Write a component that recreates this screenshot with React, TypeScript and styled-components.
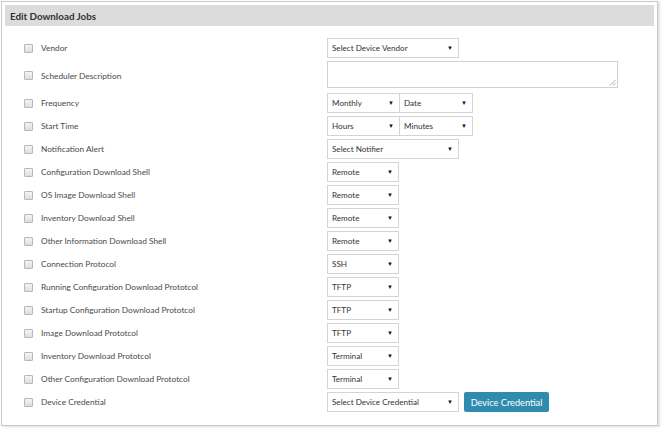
import React from "react";
import styled, { createGlobalStyle } from "styled-components";

const Global = createGlobalStyle`
  html, body { margin: 0; padding: 0; background: #ffffff; }
  body { font-family: "Lato", "Open Sans", sans-serif; color: #444; }
`;

const Page = styled.div`
  padding: 1px 0 0 1px;
  width: 661px;
  height: 430px;
  box-sizing: border-box;
`;

const Panel = styled.div`
  width: 657px;
  height: 425px;
  box-sizing: border-box;
  border: 1px solid #c8c8c8;
  padding: 3px;
  background: #fff;
  box-shadow: 2px 1px 2px rgba(0, 0, 0, 0.12);
`;

const Header = styled.div`
  height: 21px;
  background: #dcdcdc;
  display: flex;
  align-items: center;
  padding-left: 5px;
  font-size: 9.8px;
  font-weight: 700;
  color: #333;
`;

const Body = styled.div`
  padding: 12px 0 0 19px;
  display: flex;
  flex-direction: column;
  gap: 3px;
`;

const Row = styled.div<{ $tall?: boolean }>`
  display: grid;
  grid-template-columns: 17px 286px auto;
  align-items: center;
  height: ${(p) => (p.$tall ? "29px" : "20px")};
`;

const Check = styled.span`
  width: 7px;
  height: 7px;
  border: 1px solid #b8b8b8;
  border-radius: 1px;
  background: linear-gradient(#f4f4f4, #dedede);
  display: block;
`;

const Label = styled.span`
  font-size: 8.3px;
  color: #4a4a4a;
  white-space: nowrap;
`;

const Controls = styled.div`
  display: flex;
  align-items: center;
  height: 100%;
`;

const SelectBox = styled.div<{ $w: number }>`
  width: ${(p) => p.$w}px;
  height: 20px;
  box-sizing: border-box;
  border: 1px solid #d4d4d4;
  display: flex;
  align-items: center;
  justify-content: space-between;
  padding: 0 5px 0 4px;
  font-size: 8.1px;
  color: #333;
  background: #fff;
  & + & { margin-left: -1px; }
`;

const Arrow = styled.span`
  font-size: 6px;
  color: #111;
  line-height: 1;
`;

const TextArea = styled.div`
  width: 291px;
  height: 27px;
  box-sizing: border-box;
  border: 1px solid #d0d0d0;
  align-self: flex-start;
  position: relative;
`;

const Grip = styled.svg`
  position: absolute;
  right: 1px;
  bottom: 1px;
`;

const Button = styled.div`
  margin-left: 5px;
  width: 85px;
  height: 20px;
  box-sizing: border-box;
  background: #2f8cae;
  border-radius: 2px;
  color: #fff;
  font-size: 9.2px;
  display: flex;
  align-items: center;
  justify-content: center;
`;

const Select = ({ w, text }: { w: number; text: string }) => (
  <SelectBox $w={w}>
    <span>{text}</span>
    <Arrow>▼</Arrow>
  </SelectBox>
);

const WIDE = 132;
const SMALL = 72;

const simple: [string, string][] = [
  ["Configuration Download Shell", "Remote"],
  ["OS Image Download Shell", "Remote"],
  ["Inventory Download Shell", "Remote"],
  ["Other Information Download Shell", "Remote"],
  ["Connection Protocol", "SSH"],
  ["Running Configuration Download Prototcol", "TFTP"],
  ["Startup Configuration Download Prototcol", "TFTP"],
  ["Image Download Prototcol", "TFTP"],
  ["Inventory Download Prototcol", "Terminal"],
  ["Other Configuration Download Prototcol", "Terminal"],
];

export default function App() {
  return (
    <Page>
      <Global />
      <Panel>
        <Header>Edit Download Jobs</Header>
        <Body>
          <Row>
            <Check />
            <Label>Vendor</Label>
            <Controls>
              <Select w={WIDE} text="Select Device Vendor" />
            </Controls>
          </Row>
          <Row $tall>
            <Check />
            <Label>Scheduler Description</Label>
            <Controls>
              <TextArea>
                <Grip width="7" height="7" viewBox="0 0 7 7">
                  <path d="M6.5 1 L1 6.5 M6.5 4 L4 6.5" stroke="#999" strokeWidth="0.8" />
                </Grip>
              </TextArea>
            </Controls>
          </Row>
          <Row>
            <Check />
            <Label>Frequency</Label>
            <Controls>
              <Select w={73} text="Monthly" />
              <Select w={74} text="Date" />
            </Controls>
          </Row>
          <Row>
            <Check />
            <Label>Start Time</Label>
            <Controls>
              <Select w={73} text="Hours" />
              <Select w={74} text="Minutes" />
            </Controls>
          </Row>
          <Row>
            <Check />
            <Label>Notification Alert</Label>
            <Controls>
              <Select w={WIDE} text="Select Notifier" />
            </Controls>
          </Row>
          {simple.map(([label, value]) => (
            <Row key={label}>
              <Check />
              <Label>{label}</Label>
              <Controls>
                <Select w={SMALL} text={value} />
              </Controls>
            </Row>
          ))}
          <Row>
            <Check />
            <Label>Device Credential</Label>
            <Controls>
              <Select w={WIDE} text="Select Device Credential" />
              <Button>Device Credential</Button>
            </Controls>
          </Row>
        </Body>
      </Panel>
    </Page>
  );
}
